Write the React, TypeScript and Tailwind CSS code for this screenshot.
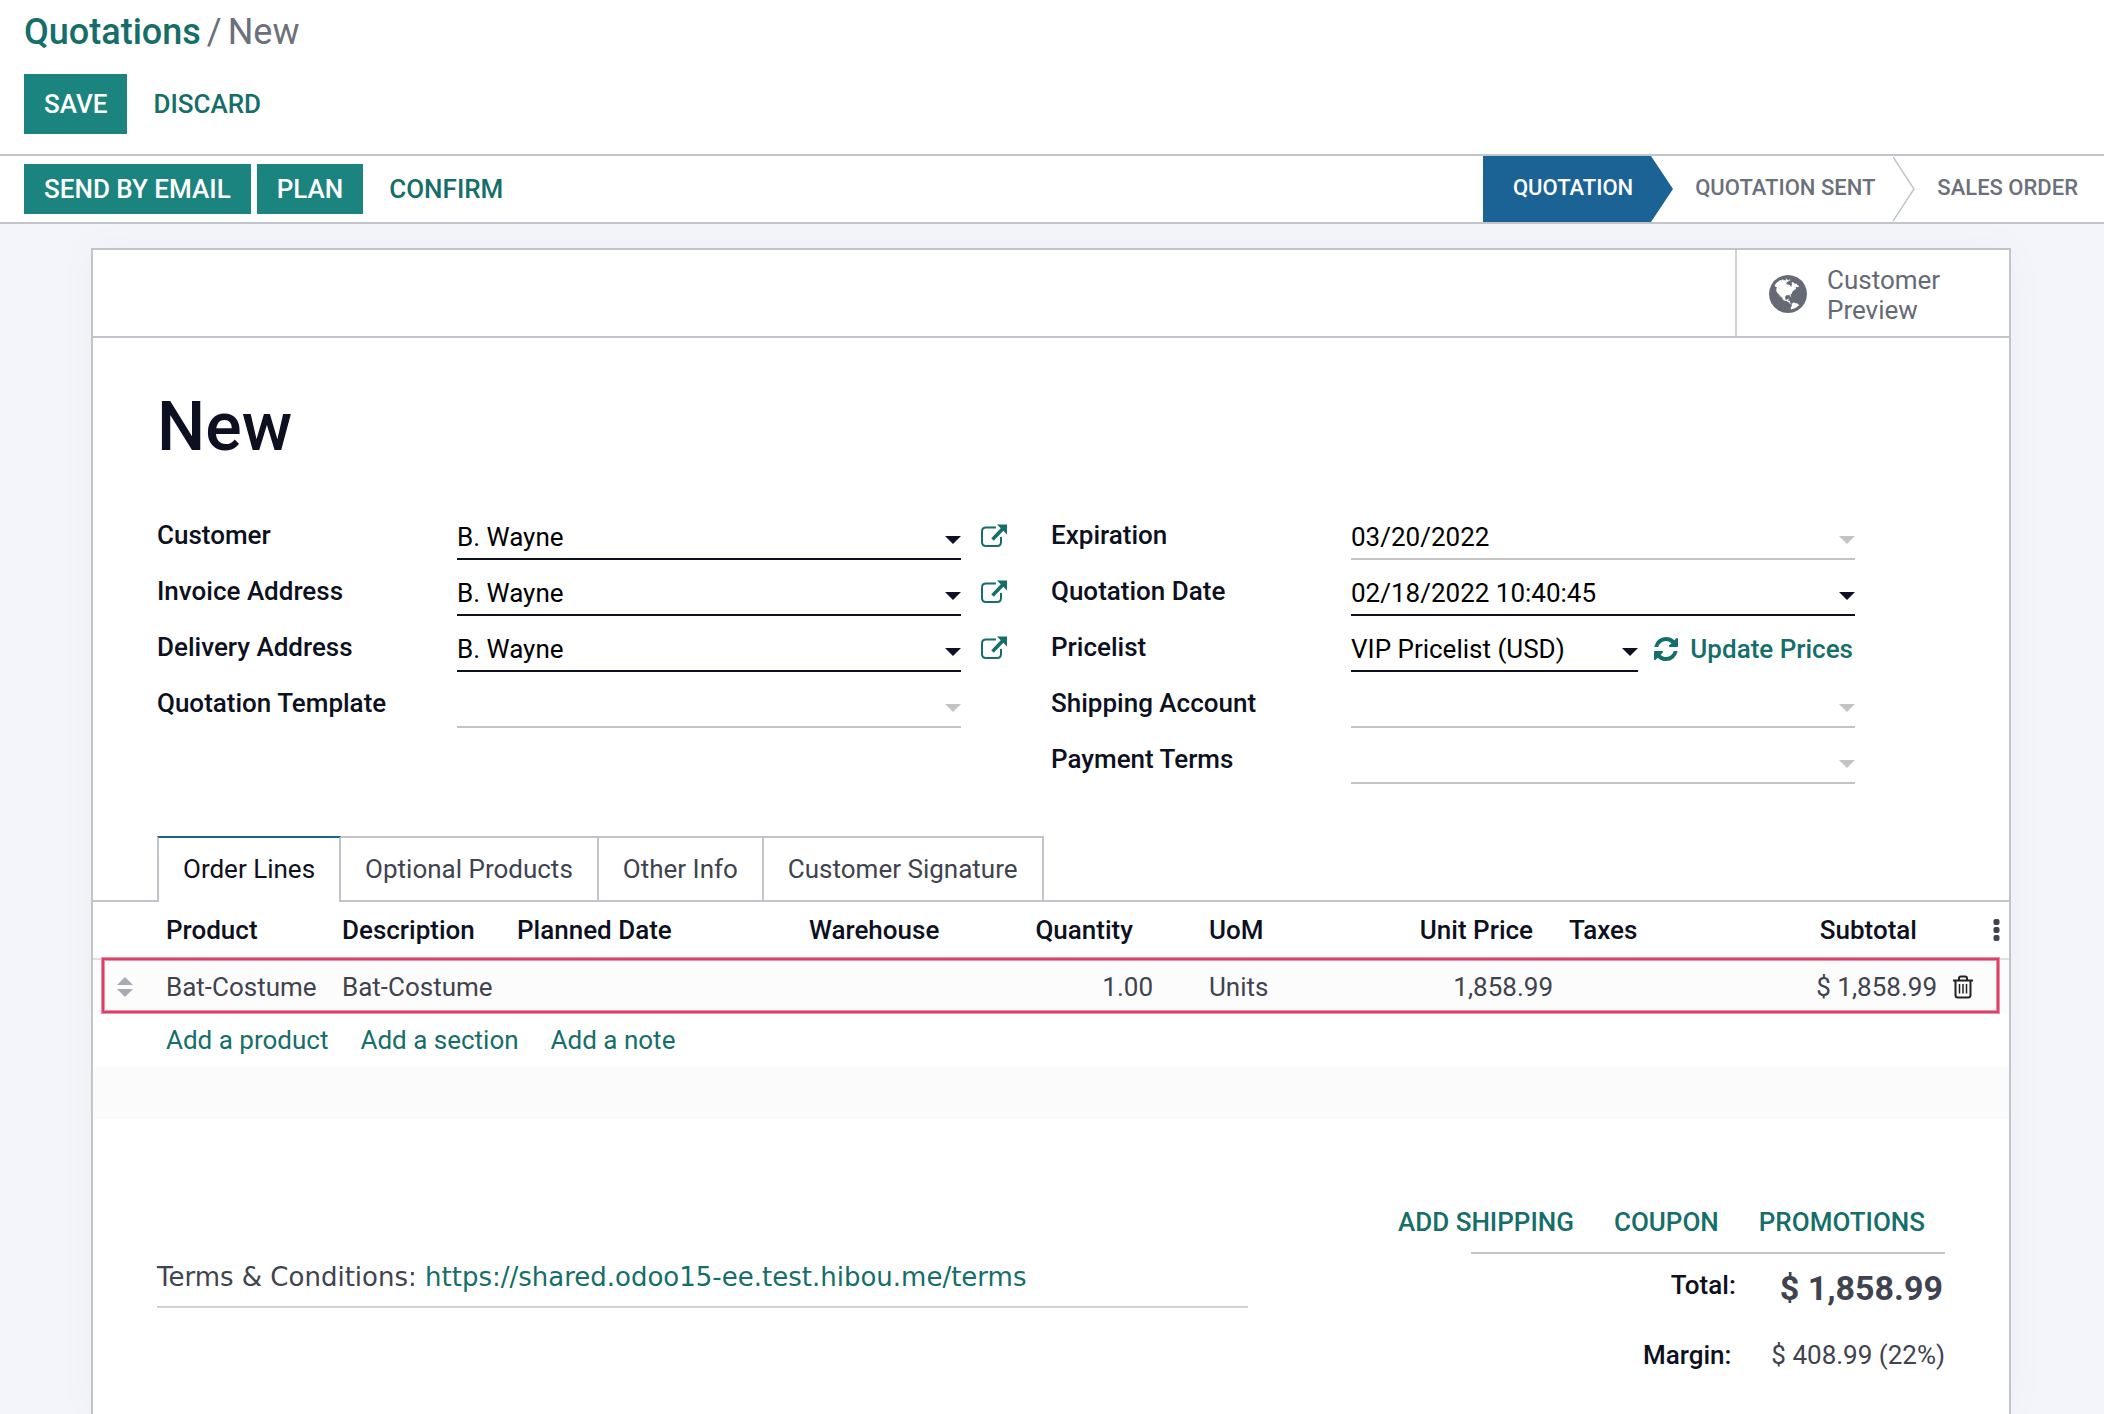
import type { ReactNode } from 'react';

const globePath =
  'M768 128q209 0 385.500 103t279.500 279.500 103 385.500-103 385.500-279.500 279.500-385.500 103-385.500-103-279.500-279.500-103-385.500 103-385.500 279.500-279.500 385.500-103zm274 521q-2 1-9.500 9.500t-13.500 9.500q2 0 4.500-5t5-11 3.500-7q6-7 22-15 14-6 52-12 34-8 51 11-2-2 9.500-13t14.500-12q3-2 15-4.500t15-7.500l2-22q-12 1-17.500-7t-6.500-21q0 2-6 8 0-7-4.500-8t-11.500 1-9 1q-10-3-15-7.500t-8-16.500-4-15q-2-5-9.500-10.500t-9.500-10.500q-1-2-2.500-5.500t-3-6.500-4-5.500-5.500-2.500-7 5-7.500 10-4.500 5q-3-2-6-1.500t-4.500 1-4.500 3-5 3.500q-3 2-8.500 3t-8.500 2q15-5-1-11-10-4-16-3 9-4 7.500-12t-8.500-14h5q-1-4-8.500-8.500t-17.500-8.500-13-6q-8-5-34-9.500t-33-.5q-5 6-4.500 10.500t4 14 3.500 12.500q1 6-5.500 13t-6.500 12q0 7 14 15.500t10 21.500q-3 8-16 16t-16 12q-5 8-1.500 18.500t10.500 16.500q2 2 1.500 4t-3.500 4.500-5.500 4-6.500 3.500l-3 2q-11 5-20.500-6t-13.500-26q-7-25-16-30-23-8-29 1-5-13-41-26-25-9-58-4 6-1 0-15-7-15-19-12 3-6 4-17.500t1-13.500q3-13 12-23 1-1 7-8.500t9.500-13.500.5-6q35 4 50-11 5-5 11.500-17t10.500-17q9-6 14-5.500t14.500 5.500 14.500 5q14 1 15.500-11t-7.500-20q12 1 3-17-4-7-8-9-12-4-27 5-8 4 2 8-1-1-9.500 10.500t-16.500 17.500-16-5q-1-1-5.500-13.500t-9.500-13.500q-8 0-16 15 3-8-11-15t-24-8q19-12-8-27-7-4-20.500-5t-19.500 4q-5 7-5.500 11.500t5 8 10.500 5.500 11.500 4 8.500 3q14 10 8 14-2 1-8.500 3.500t-11.500 4.500-6 4q-3 4 0 14t-2 14q-5-5-9-17.500t-7-16.500q7 9-25 6l-10-1q-4 0-16 2t-20.500 1-13.500-8q-4-8 0-20 1-4 4-2-4-3-11-9.500t-10-8.500q-46 15-94 41 6 1 12-1 5-2 13-6.500t10-5.500q34-14 42-7l5-5q14 16 20 25-7-4-30-1-20 6-22 12 7 12 5 18-4-3-11.500-10t-14.500-11-15-5q-16 0-22 1-146 80-235 222 7 7 12 8 4 1 5 9t2.500 11 11.500-3q9 8 3 19 1-1 44 27 19 17 21 21 3 11-10 18-1-2-9-9t-9-4q-3 5 .5 18.500t10.500 12.500q-7 0-9.500 16t-2.500 35.500-1 23.500l2 1q-3 12 5.500 34.500t21.500 19.500q-13 3 20 43 6 8 8 9 3 2 12 7.500t15 10 10 10.500q4 5 10 22.500t14 23.500q-2 6 9.500 20t10.500 23q-1 0-2.500 1t-2.500 1q3 7 15.500 14t15.500 13q1 3 2 10t3 11 8 2q2-20-24-62-15-25-17-29-3-5-5.500-15.500t-4.500-14.500q2 0 6 1.500t8.500 3.500 7.500 4 2 3q-3 7 2 17.500t12 18.500 17 19 12 13q6 6 14 19.500t0 13.500q9 0 20 10t17 20q5 8 8 26t5 24q2 7 8.500 13.500t12.500 9.500l16 8 13 7q5 2 18.500 10.500t21.500 11.500q10 4 16 4t14.500-2.500 13.500-3.500q15-2 29 15t21 21q36 19 55 11-2 1 .5 7.500t8 15.500 9 14.500 5.500 8.500q5 6 18 15t18 15q6-4 7-9-3 8 7 20t18 10q14-3 14-32-31 15-49-18 0-1-2.500-5.500t-4-8.500-2.500-8.500 0-7.500 5-3q9 0 10-3.500t-2-12.500-4-13q-1-8-11-20t-12-15q-5 9-16 8t-16-9q0 1-1.500 5.500t-1.500 6.500q-13 0-15-1 1-3 2.500-17.500t3.500-22.500q1-4 5.500-12t7.500-14.500 4-12.500-4.500-9.500-17.500-2.500q-19 1-26 20-1 3-3 10.500t-5 11.500-9 7q-7 3-24 2t-24-5q-13-8-22.500-29t-9.500-37q0-10 2.500-26.500t3-25-5.500-24.500q3-2 9-9.500t10-10.500q2-1 4.500-1.500t4.500 0 4-1.500 3-6q-1-1-4-3-3-3-4-3 7 3 28.500-1.500t27.500 1.500q15 11 22-2 0-1-2.500-9.500t-.5-13.500q5 27 29 9 3 3 15.500 5t17.500 5q3 2 7 5.500t5.500 4.500 5-.5 8.500-6.500q10 14 12 24 11 40 19 44 7 3 11 2t4.500-9.500 0-14-1.500-12.500l-1-8v-18l-1-8q-15-3-18.500-12t1.500-18.500 15-18.500q1-1 8-3.500t15.500-6.500 12.500-8q21-19 15-35 7 0 11-9-1 0-5-3t-7.500-5-4.500-2q9-5 2-16 5-3 7.500-11t7.500-10q9 12 21 2 7-8 1-16 5-7 20.500-10.500t18.500-9.500q7 2 8-2t1-12 3-12q4-5 15-9t13-5l17-11q3-4 0-4 18 2 31-11 10-11-6-20 3-6-3-9.500t-15-5.500q3-1 11.500-.5t10.500-1.500q15-10-7-16-17-5-43 12zm-163 877q206-36 351-189-3-3-12.500-4.500t-12.500-3.500q-18-7-24-8 1-7-2.500-13t-8-9-12.500-8-11-7q-2-2-7-6t-7-5.500-7.500-4.500-8.500-2-10 1l-3 1q-3 1-5.500 2.500t-5.500 3-4 3 0 2.500q-21-17-36-22-5-1-11-5.500t-10.500-7-10-1.500-11.500 7q-5 5-6 15t-2 13q-7-5 0-17.500t2-18.500q-3-6-10.500-4.500t-12 4.500-11.500 8.500-9 6.500-8.500 5.500-8.500 7.500q-3 4-6 12t-5 11q-2-4-11.500-6.500t-9.500-5.500q2 10 4 35t5 38q7 31-12 48-27 25-29 40-4 22 12 26 0 7-8 20.500t-7 21.500q0 6 2 16z';

const refreshPath =
  'M1511 1056q0 5-1 7-64 268-268 434.500t-478 166.500q-146 0-282.500-55t-243.500-157l-129 129q-19 19-45 19t-45-19-19-45v-448q0-26 19-45t45-19h448q26 0 45 19t19 45-19 45l-137 137q71 66 161 102t187 36q134 0 250-65t186-179q11-17 53-117 8-23 30-23h192q13 0 22.500 9.500t9.500 22.500zm25-800v448q0 26-19 45t-45 19h-448q-26 0-45-19t-19-45 19-45l138-138q-148-137-349-137-134 0-250 65t-186 179q-11 17-53 117-8 23-30 23h-199q-13 0-22.500-9.500t-9.500-22.500v-7q65-268 270-434.500t480-166.500q146 0 284 55.500t245 156.500l130-129q19-19 45-19t45 19 19 45z';

function ExternalLinkIcon() {
  return (
    <svg viewBox="0 0 26 24" className="h-6 w-[26px]" aria-hidden="true">
      <path
        d="M15 3.500H5Q1 3.500 1 7.500V18Q1 22 5 22H16Q20 22 20 18V13"
        fill="none"
        stroke="currentColor"
        strokeWidth="2"
      />
      <path d="M11.500 15.500L22 4.500" stroke="currentColor" strokeWidth="3.500" />
      <path d="M16 0.500H26V10.500Z" fill="currentColor" />
    </svg>
  );
}

function TrashIcon() {
  return (
    <svg
      viewBox="0 0 20 24"
      className="h-6 w-5"
      fill="none"
      stroke="currentColor"
      strokeWidth="2"
      aria-hidden="true"
    >
      <path d="M0 5.500H20M6 5V3.500Q6 1.500 8 1.500H12Q14 1.500 14 3.500V5" />
      <path d="M2.500 6V20Q2.500 22.500 5 22.500H15Q17.500 22.500 17.500 20V6" />
      <path d="M6.500 9V18.500M10 9V18.500M13.500 9V18.500" strokeWidth="1.500" />
    </svg>
  );
}

type FieldProps = {
  id: string;
  label: string;
  value?: string;
  required?: boolean;
  date?: boolean;
  link?: boolean;
  action?: ReactNode;
};

function Field({ id, label, value = '', required, date, link, action }: FieldProps) {
  const control = `block h-10 w-full appearance-none rounded-none border-b-2 bg-transparent p-0 pb-1 text-black outline-none ${
    required ? 'border-[#0d1020]' : 'border-[#c4c4c4]'
  }`;

  return (
    <div className="flex">
      <label htmlFor={id} className="w-[300px] shrink-0 font-medium text-[#0d1020]">
        {label}
      </label>
      <div className="flex min-w-0 flex-1">
        <div className="relative min-w-0 flex-1">
          {date ? (
            <input id={id} type="text" defaultValue={value} className={control} />
          ) : (
            <select id={id} defaultValue={value} className={control}>
              <option value={value}>{value}</option>
            </select>
          )}
          <svg
            viewBox="0 0 16 8"
            className={`pointer-events-none absolute right-0 top-4 h-2 w-4 ${
              required ? 'text-[#0d1020]' : 'text-[#c4c4c4]'
            }`}
            aria-hidden="true"
          >
            <path d="M0 0H16L8 8Z" fill="currentColor" />
          </svg>
        </div>
        {action}
      </div>
      <div className="w-[90px] shrink-0 pl-5 pt-1">
        {link && (
          <button type="button" aria-label={`Open ${label}`} className="block text-[#156e69]">
            <ExternalLinkIcon />
          </button>
        )}
      </div>
    </div>
  );
}

const tabs = ['Order Lines', 'Optional Products', 'Other Info', 'Customer Signature'];

export default function App() {
  return (
    <div className="flex min-h-screen flex-col bg-[#f4f5fa] font-['Roboto',sans-serif] text-[26px] leading-[30px] text-[#3f4350]">
      {/* Control panel */}
      <header className="border-b-2 border-[#c1c4cb] bg-white px-6 py-5 pt-[11px]">
        <nav className="flex gap-1.5 text-4xl leading-[42px] text-[#6b707b]">
          <a href="#quotations" className="font-medium text-[#156e69]">
            Quotations
          </a>
          <span>/</span>
          <span>New</span>
        </nav>
        <div className="mt-[21px] flex h-[60px] items-center font-medium">
          <button type="button" className="h-full bg-[#1b847e] px-5 text-white">
            SAVE
          </button>
          <button type="button" className="ml-1.5 h-full px-5 text-[#156e69]">
            DISCARD
          </button>
        </div>
      </header>

      {/* Status bar */}
      <div className="flex h-[68px] justify-between border-b-2 border-[#c1c4cb] bg-white">
        <div className="flex items-center gap-1.5 px-6 font-medium">
          <button type="button" className="h-[50px] bg-[#1b847e] px-5 text-white">
            SEND BY EMAIL
          </button>
          <button type="button" className="h-[50px] bg-[#1b847e] px-5 text-white">
            PLAN
          </button>
          <button type="button" className="h-[50px] px-5 text-[#156e69]">
            CONFIRM
          </button>
        </div>
        <ol className="flex pr-[26px] text-[22px] font-medium leading-[64px] text-[#6b707b]">
          <li className="flex">
            <span className="bg-[#1b6295] pl-[30px] pr-[18px] text-white">QUOTATION</span>
            <svg viewBox="0 0 22 66" className="h-full w-[22px] text-[#1b6295]" aria-hidden="true">
              <path d="M0 0L22 33L0 66Z" fill="currentColor" />
            </svg>
          </li>
          <li className="flex pl-[22px]">
            <span className="pr-[18px]">QUOTATION SENT</span>
            <svg viewBox="0 0 22 66" className="h-full w-[22px] text-[#c1c4cb]" aria-hidden="true">
              <path d="M0 1L21 33L0 65" fill="none" stroke="currentColor" strokeWidth="1.500" />
            </svg>
          </li>
          <li className="pl-[22px]">SALES ORDER</li>
        </ol>
      </div>

      {/* Sheet */}
      <main className="ml-[91px] mr-[93px] mt-6 flex-1 border-2 border-b-0 border-[#c1c4cb] bg-white pb-10 shadow-[0_0_40px_rgba(0,0,0,0.03)]">
        <div className="flex h-[88px] justify-end border-b-2 border-[#c1c4cb]">
          <button
            type="button"
            className="flex w-[274px] items-center gap-5 border-l-2 border-[#cdd0d5] pl-8 pt-0.5 text-left text-[#666a75]"
          >
            <svg viewBox="0 128 1536 1536" className="size-[38px]" aria-hidden="true">
              <path d={globePath} fill="currentColor" />
            </svg>
            <span className="pt-0.5">
              Customer
              <br />
              Preview
            </span>
          </button>
        </div>

        <div className="px-16 pt-[49px]">
          <h1 className="text-[68px] font-medium leading-[80px] text-[#0d1020]">New</h1>

          <div className="mt-[53px] grid grid-cols-2">
            <div className="flex flex-col gap-4">
              <Field id="customer" label="Customer" value="B. Wayne" required link />
              <Field id="invoice" label="Invoice Address" value="B. Wayne" required link />
              <Field id="delivery" label="Delivery Address" value="B. Wayne" required link />
              <Field id="template" label="Quotation Template" />
            </div>
            <div className="flex flex-col gap-4">
              <Field id="expiration" label="Expiration" value="03/20/2022" date />
              <Field id="date" label="Quotation Date" value="02/18/2022 10:40:45" date required />
              <Field
                id="pricelist"
                label="Pricelist"
                value="VIP Pricelist (USD)"
                required
                action={
                  <button
                    type="button"
                    className="ml-4 flex h-[34px] shrink-0 items-center gap-3 pr-0.5 font-medium text-[#156e69]"
                  >
                    <svg viewBox="0 128 1536 1536" className="size-6" aria-hidden="true">
                      <path d={refreshPath} fill="currentColor" />
                    </svg>
                    Update Prices
                  </button>
                }
              />
              <Field id="shipping" label="Shipping Account" />
              <Field id="terms" label="Payment Terms" />
            </div>
          </div>
        </div>

        {/* Notebook */}
        <div role="tablist" className="mt-[52px] flex h-[66px] border-b-2 border-[#c1c4cb] pl-16">
          {tabs.map((tab, index) => (
            <button
              key={tab}
              type="button"
              role="tab"
              aria-selected={index === 0}
              className={
                index === 0
                  ? '-mb-0.5 border-x-2 border-t-2 border-x-[#c1c4cb] border-t-[#1b6295] bg-white px-6 pb-0.5 text-[#0d1020]'
                  : 'border-r-2 border-t-2 border-[#c1c4cb] px-6'
              }
            >
              {tab}
            </button>
          ))}
        </div>

        <div className="relative">
          <table className="w-full table-fixed text-left">
            <colgroup>
              <col className="w-[65px]" />
              <col className="w-[176px]" />
              <col className="w-[175px]" />
              <col className="w-[292px]" />
              <col className="w-[200px]" />
              <col className="w-[160px]" />
              <col className="w-[240px]" />
              <col className="w-[160px]" />
              <col />
              <col className="w-[160px]" />
              <col className="w-[64px]" />
            </colgroup>
            <thead className="text-[#0d1020]">
              <tr className="h-[57px] border-b-2 border-[#dee0e3] *:px-2 *:font-medium">
                <th />
                <th>Product</th>
                <th>Description</th>
                <th>Planned Date</th>
                <th>Warehouse</th>
                <th className="text-right">
                  <span className="pr-5">Quantity</span>
                </th>
                <th>
                  <span className="pl-10">UoM</span>
                </th>
                <th className="text-right">
                  <span className="pr-5">Unit Price</span>
                </th>
                <th>Taxes</th>
                <th className="text-right">
                  <span className="pr-5">Subtotal</span>
                </th>
                <th>
                  <button
                    type="button"
                    aria-label="Optional columns"
                    className="ml-auto block text-[#3f4350]"
                  >
                    <svg viewBox="0 0 8 22" className="h-[22px] w-2" fill="currentColor" aria-hidden="true">
                      <rect x="0.500" width="6" height="6" rx="2" />
                      <rect x="0.500" y="8" width="6" height="6" rx="2" />
                      <rect x="0.500" y="16" width="6" height="6" rx="2" />
                    </svg>
                  </button>
                </th>
              </tr>
            </thead>
            <tbody>
              <tr className="h-[54px] bg-[#fcfcfc] *:px-2">
                <td>
                  <svg
                    viewBox="0 0 16 22"
                    className="ml-4 h-[22px] w-4 text-[#a5abb2]"
                    fill="currentColor"
                    aria-hidden="true"
                  >
                    <path d="M8 1L16 9H0ZM0 13H16L8 21Z" />
                  </svg>
                </td>
                <td>Bat-Costume</td>
                <td>Bat-Costume</td>
                <td />
                <td />
                <td className="text-right">1.00</td>
                <td>
                  <span className="pl-10">Units</span>
                </td>
                <td className="text-right">1,858.99</td>
                <td />
                <td className="text-right">$ 1,858.99</td>
                <td>
                  <button type="button" aria-label="Delete line" className="block text-[#222]">
                    <TrashIcon />
                  </button>
                </td>
              </tr>
              <tr className="h-[54px] *:px-2">
                <td />
                <td colSpan={10}>
                  <div className="flex gap-8 text-[#156e69]">
                    <a href="#product">Add a product</a>
                    <a href="#section">Add a section</a>
                    <a href="#note">Add a note</a>
                  </div>
                </td>
              </tr>
              <tr className="h-[52px] bg-[#fbfbfb]">
                <td colSpan={11} />
              </tr>
            </tbody>
          </table>
          {/* Highlight around the order line */}
          <div className="pointer-events-none absolute left-[9px] right-2.5 top-14 h-[55px] border-2 border-[#dd4067] shadow-[0_0_0_1px_#ec90a6,inset_0_0_0_1px_#ec90a6]" />
        </div>

        {/* Terms and totals */}
        <div className="px-16 pt-[88px]">
          <div className="flex justify-end font-medium text-[#156e69]">
            <button type="button" className="px-5">
              ADD SHIPPING
            </button>
            <button type="button" className="px-5">
              COUPON
            </button>
            <button type="button" className="px-5">
              PROMOTIONS
            </button>
          </div>
          <div className="mt-[15px] flex items-start justify-between">
            <p className="w-[61%] border-b-2 border-[#d3d3d3] pb-3.5 pt-2.5 font-['DejaVu_Sans',sans-serif]">
              Terms &amp; Conditions:{' '}
              <a href="#terms-page" className="text-[#156e69]">
                https://shared.odoo15-ee.test.hibou.me/terms
              </a>
            </p>
            <dl className="w-[474px] border-t-2 border-[#c1c4cb] pt-3.5">
              <div className="flex justify-end gap-11 pr-0.5">
                <dt className="font-medium leading-[34px] text-[#0d1020]">Total:</dt>
                <dd className="text-[34px] font-bold leading-[40px]">$ 1,858.99</dd>
              </div>
              <div className="mt-8 flex justify-end gap-10">
                <dt className="font-medium text-[#0d1020]">Margin:</dt>
                <dd>$ 408.99 (22%)</dd>
              </div>
            </dl>
          </div>
        </div>
      </main>
    </div>
  );
}
